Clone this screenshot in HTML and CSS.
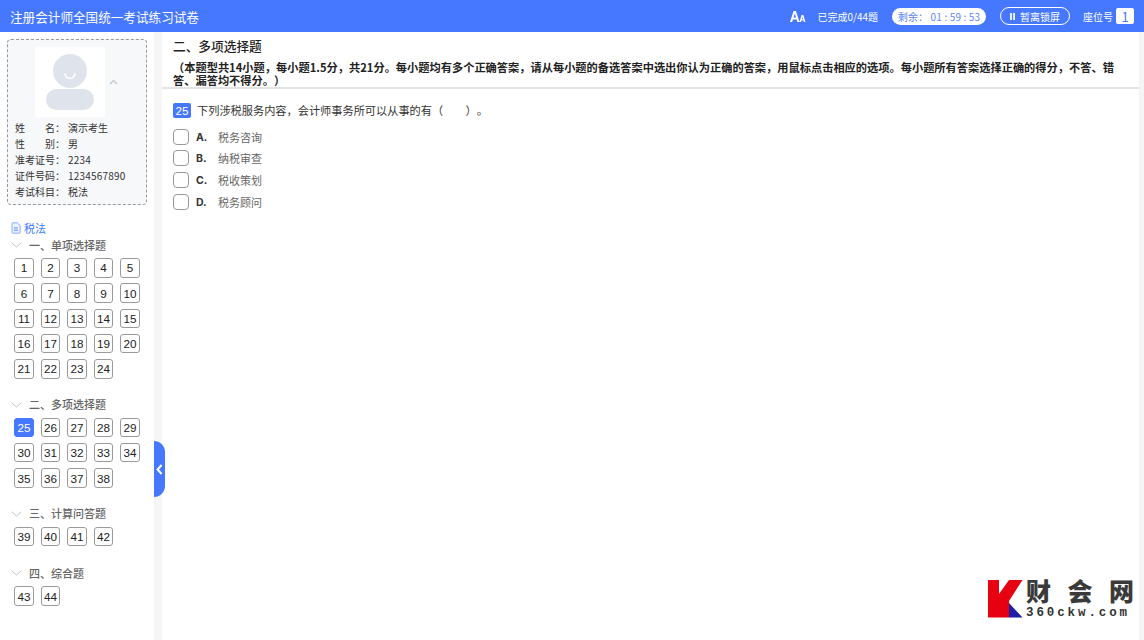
FILE: index.html
```html
<!DOCTYPE html>
<html lang="zh-CN">
<head>
<meta charset="utf-8">
<title>注册会计师全国统一考试练习试卷</title>
<link rel="stylesheet" href="styles.css">
</head>
<body>
<header class="top">
  <div class="top-title">注册会计师全国统一考试练习试卷</div>
  <div class="top-tools">
    <svg class="aa" width="16" height="13" viewBox="0 0 16 13"><path fill="#fff" d="M0 12 3.6 1h2.3L9.5 12H7.4l-.8-2.6H2.9L2.1 12zM3.5 7.6h2.5L4.8 3.6zM9.4 12l2.2-7h1.7l2.2 7h-1.6l-.4-1.4h-2.1l-.4 1.4zM11.8 9.3h1.3l-.65-2.3z"/></svg>
    <span class="done">已完成0/44题</span>
    <span class="timer">剩余： 01 : 59 : 53</span>
    <span class="pause"><i class="pause-icon"></i>暂离锁屏</span>
    <span class="seat">座位号<b class="seat-no">1</b></span>
  </div>
</header>
<div class="page">
  <aside class="side">
    <section class="card">
      <div class="avatar-row">
        <div class="avatar">
          <svg width="70" height="70" viewBox="0 0 70 70">
            <rect width="70" height="70" fill="#fff"/>
            <circle cx="35" cy="24" r="17" fill="#dfe3ec"/>
            <path d="M30 26.5a5 5 0 0 0 10 0" fill="none" stroke="#fff" stroke-width="1.6"/>
            <rect x="11" y="42" width="48" height="21" rx="10.5" fill="#dfe3ec"/>
          </svg>
        </div>
        <svg class="caret" width="9" height="6" viewBox="0 0 9 6"><path d="M1 5 4.5 1.5 8 5" fill="none" stroke="#c6c9cf" stroke-width="1.4"/></svg>
      </div>
      <dl class="info">
        <div class="info-row"><dt class="info-key"><span class="key-text">姓名</span>：</dt><dd class="info-val">演示考生</dd></div>
        <div class="info-row"><dt class="info-key"><span class="key-text">性别</span>：</dt><dd class="info-val">男</dd></div>
        <div class="info-row"><dt class="info-key"><span class="key-text">准考证号</span>：</dt><dd class="info-val info-num">2234</dd></div>
        <div class="info-row"><dt class="info-key"><span class="key-text">证件号码</span>：</dt><dd class="info-val info-num">1234567890</dd></div>
        <div class="info-row"><dt class="info-key"><span class="key-text">考试科目</span>：</dt><dd class="info-val">税法</dd></div>
      </dl>
    </section>
    <nav class="nav">
      <div class="subject">
        <svg width="10" height="12" viewBox="0 0 10 12"><path d="M1 1.5Q1 .8 1.7.8H6.3L9.2 3.6V10.3Q9.2 11.2 8.3 11.2H1.9Q1 11.2 1 10.3Z" fill="#eaf1ff" stroke="#7fa6ff" stroke-width=".9"/><path d="M3 6h4M3 8.3h4" stroke="#4a7fff" stroke-width=".9"/></svg>
        <span>税法</span>
      </div>
      <div class="group g1">
        <div class="group-head"><svg class="chev" width="11" height="6" viewBox="0 0 11 6"><path d="M.7.7 5.5 5 10.3.7" fill="none" stroke="#c3c3c3"/></svg><span class="head-text">一、单项选择题</span></div>
        <div class="nums">
          <a class="num">1</a><a class="num">2</a><a class="num">3</a><a class="num">4</a><a class="num">5</a>
          <a class="num">6</a><a class="num">7</a><a class="num">8</a><a class="num">9</a><a class="num">10</a>
          <a class="num">11</a><a class="num">12</a><a class="num">13</a><a class="num">14</a><a class="num">15</a>
          <a class="num">16</a><a class="num">17</a><a class="num">18</a><a class="num">19</a><a class="num">20</a>
          <a class="num">21</a><a class="num">22</a><a class="num">23</a><a class="num">24</a>
        </div>
      </div>
      <div class="group g2">
        <div class="group-head"><svg class="chev" width="11" height="6" viewBox="0 0 11 6"><path d="M.7.7 5.5 5 10.3.7" fill="none" stroke="#c3c3c3"/></svg><span class="head-text">二、多项选择题</span></div>
        <div class="nums">
          <a class="num current">25</a><a class="num">26</a><a class="num">27</a><a class="num">28</a><a class="num">29</a>
          <a class="num">30</a><a class="num">31</a><a class="num">32</a><a class="num">33</a><a class="num">34</a>
          <a class="num">35</a><a class="num">36</a><a class="num">37</a><a class="num">38</a>
        </div>
      </div>
      <div class="group g3">
        <div class="group-head"><svg class="chev" width="11" height="6" viewBox="0 0 11 6"><path d="M.7.7 5.5 5 10.3.7" fill="none" stroke="#c3c3c3"/></svg><span class="head-text">三、计算问答题</span></div>
        <div class="nums"><a class="num">39</a><a class="num">40</a><a class="num">41</a><a class="num">42</a></div>
      </div>
      <div class="group g4">
        <div class="group-head"><svg class="chev" width="11" height="6" viewBox="0 0 11 6"><path d="M.7.7 5.5 5 10.3.7" fill="none" stroke="#c3c3c3"/></svg><span class="head-text">四、综合题</span></div>
        <div class="nums"><a class="num">43</a><a class="num">44</a></div>
      </div>
    </nav>
  </aside>
  <div class="gutter">
    <button class="collapse" type="button"><svg width="7" height="11" viewBox="0 0 7 11"><path d="M5.6 1 1.6 5.5l4 4.5" fill="none" stroke="#fff" stroke-width="2"/></svg></button>
  </div>
  <main class="main">
    <div class="intro">
      <h2 class="intro-title">二、多项选择题</h2>
      <p class="intro-text">（本题型共14小题，每小题1.5分，共21分。每小题均有多个正确答案，请从每小题的备选答案中选出你认为正确的答案，用鼠标点击相应的选项。每小题所有答案选择正确的得分，不答、错答、漏答均不得分。）</p>
    </div>
    <div class="question">
      <div class="stem"><span class="stem-no">25</span><span>下列涉税服务内容，会计师事务所可以从事的有（　　）。</span></div>
      <ul class="options">
        <li class="option"><i class="check"></i><b class="opt-key">A.</b><span>税务咨询</span></li>
        <li class="option"><i class="check"></i><b class="opt-key">B.</b><span>纳税审查</span></li>
        <li class="option"><i class="check"></i><b class="opt-key">C.</b><span>税收策划</span></li>
        <li class="option"><i class="check"></i><b class="opt-key">D.</b><span>税务顾问</span></li>
      </ul>
    </div>
  </main>
  <div class="edge"></div>
</div>
<div class="brand">
  <svg width="35" height="38" viewBox="0 0 35 38"><path fill="#e60012" d="M0 0H11V14L21 0H34.5L21 21V37.5H0Z"/><path fill="#1d1fa8" d="M21 23 34.5 37.5H21Z"/></svg>
  <div class="brand-text">
    <div class="brand-cn"><span>财</span><span>会</span><span>网</span></div>
    <div class="brand-en">360ckw.com</div>
  </div>
</div>
</body>
</html>
```
FILE: styles.css
```css
* { box-sizing: border-box; }
html, body { margin: 0; height: 100%; overflow: hidden; }
body {
  font-family: "Noto Sans CJK SC", "Liberation Sans", sans-serif;
  background: #fff;
  color: #222;
  display: flex;
  flex-direction: column;
  font-size: 11px;
  text-spacing-trim: space-all;
}
.top {
  height: 32px;
  flex: none;
  background: #4678ff;
  color: #fff;
  display: flex;
  align-items: center;
  justify-content: space-between;
  padding: 0 10px 0 10px;
}
.top-title { font-size: 12.6px; }
.top-tools { display: flex; align-items: center; font-size: 10px; }
.aa { margin-right: 11px; }
.done { margin-right: 14px; }
.timer {
  height: 17px;
  width: 94px;
  background: #fff;
  color: #5d86ff;
  border-radius: 9px;
  display: flex;
  align-items: center;
  justify-content: center;
  margin-right: 14px;
  white-space: nowrap;
  letter-spacing: .15px;
}
.pause {
  height: 18px;
  width: 70px;
  border: 1px solid #fff;
  border-radius: 9px;
  display: flex;
  align-items: center;
  justify-content: center;
  margin-right: 13px;
}
.pause-icon {
  width: 5px;
  height: 7px;
  border-left: 2px solid #e8edff;
  border-right: 2px solid #e8edff;
  margin-right: 5px;
}
.seat { display: flex; align-items: center; }
.seat-no {
  width: 18px;
  height: 16px;
  margin-left: 3px;
  border-radius: 2px;
  background: #fff;
  color: #4678ff;
  font-size: 13px;
  font-weight: 400;
  display: flex;
  align-items: center;
  justify-content: center;
}
.page { flex: 1; display: flex; min-height: 0; }
.side { width: 154px; flex: none; padding: 7px 7px 0; background: #fff; }
.card {
  height: 166px;
  width: 140px;
  border: 1px dashed #999;
  border-radius: 4px;
  background: #f7f8fa;
  padding: 7px 0 0 7px;
}
.avatar-row { display: flex; align-items: center; padding-left: 20px; }
.avatar { width: 70px; height: 70px; }
.avatar svg { display: block; }
.caret { margin-left: 4px; margin-top: -1px; }
.info { margin: 3px 0 0; font-size: 10px; color: #333; }
.info-row { display: flex; height: 15.8px; align-items: center; }
.info-key { display: flex; width: 53px; }
.key-text { width: 40px; text-align-last: justify; }
.info-val { margin: 0; }
.info-num { letter-spacing: .2px; }
.nav { padding: 16px 0 0 0; }
.subject {
  display: flex;
  align-items: center;
  gap: 3px;
  padding-left: 4px;
  color: #3f7bff;
  font-size: 11px;
  height: 14px;
}
.group-head {
  display: flex;
  align-items: center;
  color: #666;
  font-size: 11px;
  font-weight: 500;
  height: 16px;
  padding-left: 4px;
}
.head-text { margin-top: -1px; }
.chev { margin-right: 7px; }
.nums {
  display: grid;
  grid-template-columns: repeat(5, 19.5px);
  column-gap: 7px;
  row-gap: 5.8px;
  margin: 5px 0 0 7.3px;
}
.num {
  height: 19.5px;
  border: 1px solid #9a9a9a;
  border-radius: 3px;
  background: #fff;
  color: #222;
  font-size: 11.7px;
  font-family: "Liberation Sans", sans-serif;
  display: flex;
  align-items: center;
  justify-content: center;
}
.num.current { background: #4678ff; border-color: #4678ff; color: #fff; }
.g1 { margin-top: 2px; }
.g2 { margin-top: 18px; }
.g3 { margin-top: 18px; }
.g4 { margin-top: 19px; }
.gutter { width: 8px; flex: none; background: #f5f5f5; position: relative; }
.collapse {
  position: absolute;
  left: 0;
  top: 409px;
  width: 11px;
  height: 56px;
  padding: 0;
  border: 0;
  background: #4678ff;
  border-radius: 0 11px 11px 0;
  display: flex;
  align-items: center;
  justify-content: center;
}
.main { flex: 1; min-width: 0; background: #fff; }
.intro { height: 57px; border-bottom: 2px solid #e4e4e4; padding: 5px 20px 0 11px; }
.intro-title { margin: 0; font-size: 12.7px; font-weight: 500; color: #222; line-height: 18px; }
.intro-text { margin: 5.5px 0 0; font-size: 11.22px; font-weight: 700; line-height: 13px; color: #222; }
.question { padding: 13px 11px; }
.stem { display: flex; align-items: center; font-size: 11.2px; color: #333; height: 16px; }
.stem-no {
  width: 18px;
  height: 15px;
  background: #4678ff;
  color: #fff;
  border-radius: 2px;
  font-size: 11.7px;
  font-family: "Liberation Sans", sans-serif;
  display: flex;
  align-items: center;
  justify-content: center;
  margin-right: 6px;
}
.options { list-style: none; margin: 8px 0 0; padding: 0; }
.option { display: flex; align-items: center; height: 21.6px; color: #666; font-size: 11px; }
.check {
  width: 16px;
  height: 16px;
  border: 1px solid #999;
  border-radius: 4px;
  background: #fff;
  margin-right: 7px;
}
.opt-key {
  width: 22px;
  color: #333;
  font-size: 10.5px;
  line-height: 14px;
  padding-top: 2px;
  font-family: "Inter", "Liberation Sans", sans-serif;
  font-weight: 700;
}
.edge { width: 5px; flex: none; background: #f5f5f5; }
.brand { position: absolute; left: 988px; top: 580px; display: flex; gap: 3px; align-items: flex-start; }
.brand svg { display: block; }
.brand-text { margin-top: -5px; color: #333; width: 108px; }
.brand-cn { display: flex; justify-content: space-between; font-size: 25px; font-weight: 900; line-height: 30px; color: #3a3a3a; }
.brand-en { margin-top: 2px; font-family: "Liberation Mono", monospace; font-weight: 700; font-size: 12.5px; letter-spacing: 2.9px; line-height: 13px; white-space: nowrap; }
```
